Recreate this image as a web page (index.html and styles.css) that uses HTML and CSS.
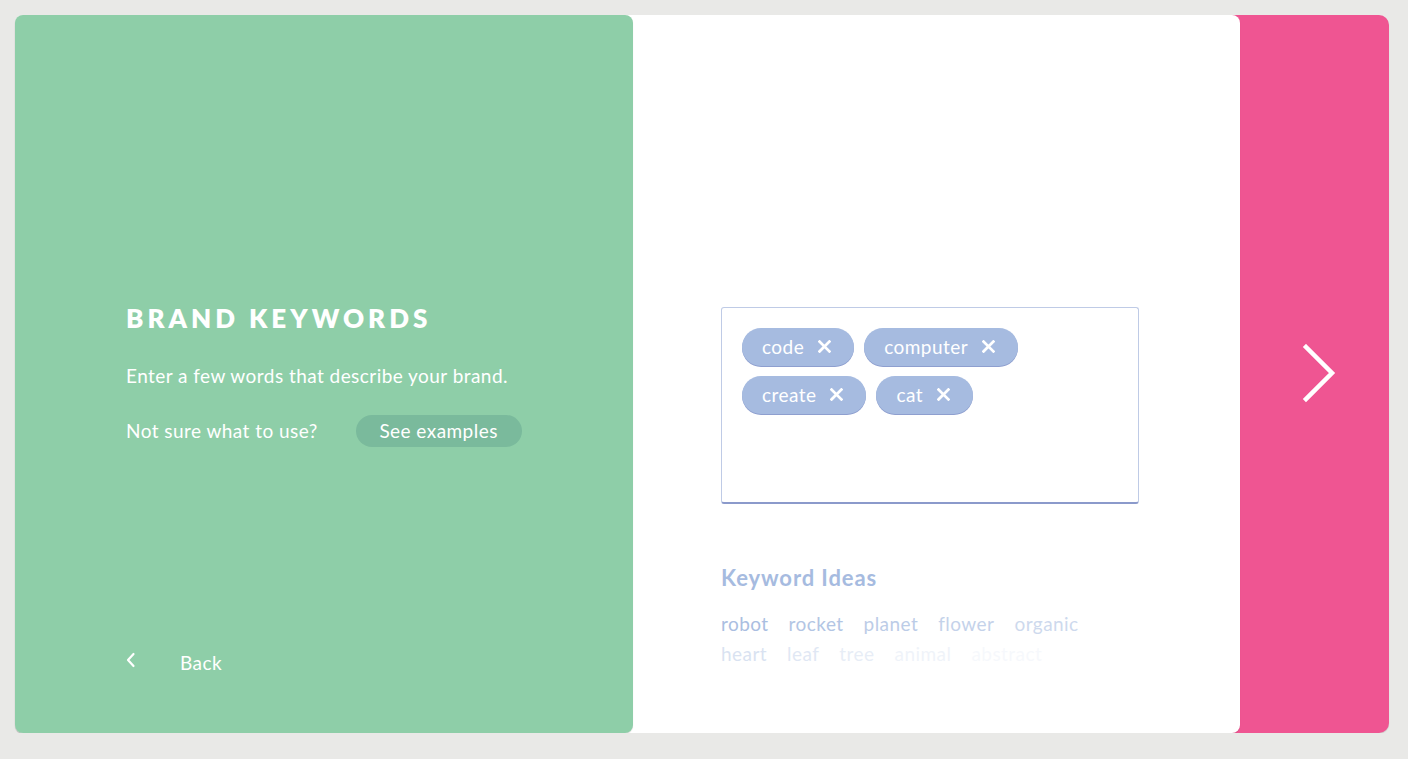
FILE: index.html
```html
<!DOCTYPE html>
<html>
<head>
<meta charset="utf-8">
<link rel="stylesheet" href="styles.css">
</head>
<body>
<div class="stage">
  <div class="sheet">
    <section class="intro">
      <div class="intro-main">
        <h1 class="title">BRAND KEYWORDS</h1>
        <p class="lead">Enter a few words that describe your brand.</p>
        <div class="hint">
          <span>Not sure what to use?</span>
          <span class="examples">See examples</span>
        </div>
      </div>
      <div class="back">
        <svg class="back-icon" width="10" height="16" viewBox="0 0 10 16"><path d="M7.5 2 L2 8 L7.5 14" fill="none" stroke="#fff" stroke-width="2.2" stroke-linecap="round" stroke-linejoin="round"/></svg>
        <span>Back</span>
      </div>
    </section>
    <section class="entry">
      <div class="tagbox">
        <span class="tag">code<svg class="x" viewBox="0 0 12 12"><path d="M1.5 1.5 L10.5 10.5 M10.5 1.5 L1.5 10.5" stroke="#fff" stroke-width="2.6" stroke-linecap="square"/></svg></span>
        <span class="tag">computer<svg class="x" viewBox="0 0 12 12"><path d="M1.5 1.5 L10.5 10.5 M10.5 1.5 L1.5 10.5" stroke="#fff" stroke-width="2.6" stroke-linecap="square"/></svg></span>
        <span class="tag">create<svg class="x" viewBox="0 0 12 12"><path d="M1.5 1.5 L10.5 10.5 M10.5 1.5 L1.5 10.5" stroke="#fff" stroke-width="2.6" stroke-linecap="square"/></svg></span>
        <span class="tag">cat<svg class="x" viewBox="0 0 12 12"><path d="M1.5 1.5 L10.5 10.5 M10.5 1.5 L1.5 10.5" stroke="#fff" stroke-width="2.6" stroke-linecap="square"/></svg></span>
      </div>
      <div class="ideas">
        <h2 class="ideas-title">Keyword Ideas</h2>
        <div class="idea-row first">
          <span class="idea i1">robot</span>
          <span class="idea i2">rocket</span>
          <span class="idea i3">planet</span>
          <span class="idea i4">flower</span>
          <span class="idea i5">organic</span>
        </div>
        <div class="idea-row">
          <span class="idea i6">heart</span>
          <span class="idea i7">leaf</span>
          <span class="idea i8">tree</span>
          <span class="idea i9">animal</span>
          <span class="idea i10">abstract</span>
        </div>
      </div>
    </section>
  </div>
  <div class="next">
    <svg width="36" height="60" viewBox="0 0 36 60"><path d="M5 3 L31 29 L5 55" fill="none" stroke="#fff" stroke-width="4.5" stroke-linecap="square" stroke-linejoin="miter"/></svg>
  </div>
</div>
</body>
</html>
```

FILE: styles.css
```css
html, body {
  margin: 0;
  padding: 0;
  background: #e9e9e7;
}
body {
  padding: 15px 19px 0 15px;
  font-family: "Lato", "Liberation Sans", sans-serif;
  letter-spacing: 0.45px;
}
.stage {
  width: 1374px;
  height: 718px;
  display: flex;
  background: #ef5592;
  border-radius: 10px;
  box-shadow: 0 1px 1px rgba(0,0,0,0.12);
}
.sheet {
  width: 1225px;
  display: flex;
  background: #fff;
  border-radius: 8px;
  box-shadow: 0 1px 1px rgba(0,0,0,0.1);
}
.intro {
  width: 618px;
  background: #8ecea8;
  border-radius: 8px;
  box-shadow: 0 1px 1px rgba(0,0,0,0.12);
  padding: 0 0 0 111px;
  box-sizing: border-box;
  display: flex;
  flex-direction: column;
  color: #fff;
}
.intro-main {
  padding-top: 288px;
  flex: 1;
}
.title {
  margin: 0;
  font-size: 26px;
  font-weight: 800;
  letter-spacing: 4px;
  line-height: 30px;
}
.lead {
  margin: 31px 0 0;
  font-size: 19px;
  line-height: 24px;
}
.hint {
  margin-top: 27px;
  display: flex;
  align-items: center;
  font-size: 19px;
}
.hint > span:first-child {
  margin-top: -2px;
}
.examples {
  margin-left: 38px;
  background: #7aba9c;
  border-radius: 16px;
  height: 32px;
  line-height: 32px;
  width: 166px;
  text-align: center;
  box-sizing: border-box;
}
.back {
  display: flex;
  align-items: center;
  padding-bottom: 59px;
  font-size: 19px;
  height: 24px;
}
.back-icon {
  margin-left: 0;
  margin-right: 44px;
  margin-top: -4px;
}
.entry {
  flex: 1;
  padding: 292px 0 0 88px;
  display: flex;
  flex-direction: column;
}
.tagbox {
  width: 418px;
  height: 197px;
  box-sizing: border-box;
  border: 1px solid #bfcbe6;
  border-bottom: 2px solid #8b9acb;
  border-radius: 3px;
  padding: 20px 20px;
  display: flex;
  flex-wrap: wrap;
  align-content: flex-start;
  gap: 10px 10px;
}
.tag {
  display: inline-flex;
  align-items: center;
  height: 38px;
  padding: 0 23px 1px 20px;
  border-radius: 19px;
  background: #a6bbe0;
  box-shadow: 0 1px 0 #8e9fcf;
  color: #fff;
  font-size: 19px;
  box-sizing: border-box;
}
.x {
  width: 13px;
  height: 13px;
  margin-left: 14px;
}
.ideas {
  margin-top: 61px;
}
.ideas-title {
  margin: 0;
  font-size: 22px;
  font-weight: 700;
  color: #a6bbe0;
  line-height: 26px;
  letter-spacing: 0.9px;
}
.idea-row {
  display: flex;
  gap: 20px;
  font-size: 19px;
  line-height: 30px;
  color: #a6bbe0;
}
.idea-row.first { margin-top: 18px; }
.i1 { opacity: 0.95; }
.i2 { opacity: 0.85; }
.i3 { opacity: 0.75; }
.i4 { opacity: 0.65; }
.i5 { opacity: 0.55; }
.i6 { opacity: 0.42; }
.i7 { opacity: 0.34; }
.i8 { opacity: 0.26; }
.i9 { opacity: 0.17; }
.i10 { opacity: 0.09; }
.next {
  flex: 1;
  display: flex;
  align-items: center;
  justify-content: center;
  padding-left: 8px;
}
```
